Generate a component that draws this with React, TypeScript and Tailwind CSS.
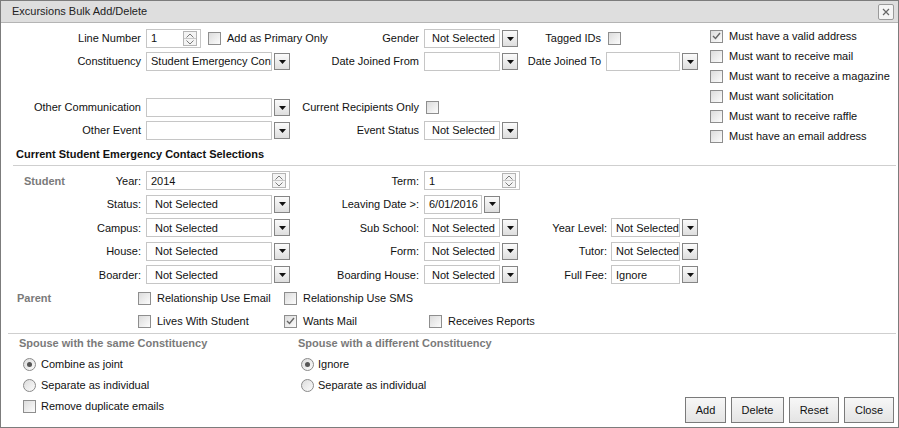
import React from "react";

const FONT = { fontFamily: '"Liberation Sans", Arial, sans-serif' };

function Arrow() {
  return (
    <svg width="7" height="4" viewBox="0 0 7 4">
      <path d="M0 0 H7 L3.5 4 Z" fill="#111" />
    </svg>
  );
}

function Select({ value = "", width, pad = "pl-[4px]" }: { value?: string; width: string; pad?: string }) {
  return (
    <div className={`flex h-[19px] shrink-0 items-center gap-[2px] ${width}`}>
      <div className={`flex h-[19px] flex-1 items-center overflow-hidden whitespace-nowrap border border-[#c6c6c6] bg-white ${pad}`}>
        {value}
      </div>
      <div className="flex h-[17px] w-[16px] shrink-0 items-center justify-center border border-[#858585] bg-gradient-to-b from-[#fbfbfb] to-[#dedede]">
        <Arrow />
      </div>
    </div>
  );
}

function Spinner({ value, width }: { value: string; width: string }) {
  return (
    <div className={`flex h-[19px] shrink-0 items-center border border-[#c6c6c6] bg-white pl-[4px] pr-[3px] ${width}`}>
      <span className="flex-1">{value}</span>
      <div className="flex h-[15px] w-[14px] shrink-0 flex-col border border-[#b5b5b5] bg-[#f4f4f4]">
        <div className="flex flex-1 items-center justify-center border-b border-[#c8c8c8]">
          <svg width="8" height="5" viewBox="0 0 8 5">
            <path d="M0.5 4.5 L4 1 L7.5 4.5" fill="none" stroke="#7a7a7a" strokeWidth="1" />
          </svg>
        </div>
        <div className="flex flex-1 items-center justify-center">
          <svg width="8" height="5" viewBox="0 0 8 5">
            <path d="M0.5 0.5 L4 4 L7.5 0.5" fill="none" stroke="#7a7a7a" strokeWidth="1" />
          </svg>
        </div>
      </div>
    </div>
  );
}

function Check({ checked = false }: { checked?: boolean }) {
  return (
    <div className="flex h-[13px] w-[13px] shrink-0 items-center justify-center border border-[#8e8e8e] bg-gradient-to-br from-[#dcdcdc] to-[#fcfcfc]">
      {checked && (
        <svg width="9" height="8" viewBox="0 0 9 8">
          <path d="M1 4 L3.5 6.5 L8 1" fill="none" stroke="#666" strokeWidth="1.4" />
        </svg>
      )}
    </div>
  );
}

function Radio({ checked = false }: { checked?: boolean }) {
  return (
    <div className="flex h-[13px] w-[13px] shrink-0 items-center justify-center rounded-full border border-[#8a8a8a] bg-gradient-to-br from-[#dcdcdc] to-[#fcfcfc]">
      {checked && <div className="h-[5px] w-[5px] rounded-full bg-[#555]" />}
    </div>
  );
}

function CheckLabel({ label, checked }: { label: string; checked?: boolean }) {
  return (
    <div className="flex items-center gap-[6px] whitespace-nowrap">
      <Check checked={checked} />
      <span>{label}</span>
    </div>
  );
}

function Label({ text, pr = "pr-[5px]" }: { text: string; pr?: string }) {
  return <div className={`whitespace-nowrap text-right ${pr}`}>{text}</div>;
}

function Btn({ text, width }: { text: string; width: string }) {
  return (
    <button className={`h-[26px] border border-[#7a7a7a] bg-gradient-to-b from-[#f7f7f7] to-[#e4e4e4] text-[#111] ${width}`}>
      {text}
    </button>
  );
}

export default function App() {
  return (
    <div style={FONT} className="flex h-[428px] w-[899px] flex-col border border-[#7c7c7c] bg-white text-[11px] text-[#111]">
      {/* TITLE BAR */}
      <div className="flex h-[22px] shrink-0 items-center justify-between border-b border-[#b4b4b4] bg-[#dedede] pl-[11px] pr-[4px] text-[#222]">
        <span>Excursions Bulk Add/Delete</span>
        <div className="flex h-[16px] w-[16px] items-center justify-center rounded-[2px] border border-[#9a9a9a] bg-[#f5f5f5]">
          <svg width="8" height="8" viewBox="0 0 8 8">
            <path d="M1 1 L7 7 M7 1 L1 7" stroke="#666" strokeWidth="1.2" />
          </svg>
        </div>
      </div>

      {/* TOP FILTERS */}
      <div className="flex h-[121px] shrink-0 items-start">
        <div className="mt-[4px] grid grid-cols-[145px_148px_130px_96px_86px_100px] auto-rows-[23px] items-center">
          <Label text="Line Number" />
          <div className="flex items-center gap-[7px] whitespace-nowrap">
            <Spinner value="1" width="w-[55px]" />
            <CheckLabel label="Add as Primary Only" />
          </div>
          <Label text="Gender" />
          <Select value="Not Selected" width="w-[94px]" pad="pl-[7px]" />
          <Label text="Tagged IDs" />
          <div className="pl-[2px]">
            <Check />
          </div>

          <Label text="Constituency" />
          <Select value="Student Emergency Contact" width="w-[144px]" />
          <Label text="Date Joined From" />
          <Select width="w-[94px]" />
          <Label text="Date Joined To" />
          <Select width="w-[92px]" />

          <div className="col-span-6" />

          <Label text="Other Communication" />
          <Select width="w-[144px]" />
          <Label text="Current Recipients Only" />
          <div className="col-span-3 pl-[2px]">
            <Check />
          </div>

          <Label text="Other Event" />
          <Select width="w-[144px]" />
          <Label text="Event Status" />
          <Select value="Not Selected" width="w-[94px]" pad="pl-[7px]" />
          <div className="col-span-2" />
        </div>

        <div className="ml-[4px] mt-[3px] flex flex-col">
          {[
            { l: "Must have a valid address", c: true },
            { l: "Must want to receive mail" },
            { l: "Must want to receive a magazine" },
            { l: "Must want solicitation" },
            { l: "Must want to receive raffle" },
            { l: "Must have an email address" },
          ].map((r) => (
            <div key={r.l} className="flex h-[20px] items-center">
              <CheckLabel label={r.l} checked={r.c} />
            </div>
          ))}
        </div>
      </div>

      {/* SECTION HEADER */}
      <div className="ml-[12px] mr-[2px] flex h-[22px] shrink-0 items-center border-b border-[#cfcfcf] pl-[3px] font-bold">
        Current Student Emergency Contact Selections
      </div>

      {/* STUDENT */}
      <div className="mt-[3px] grid grid-cols-[145px_148px_130px_100px_87px_90px] auto-rows-[23.5px] items-center">
        <div className="flex items-center justify-between pl-[23px] pr-[5px]">
          <span className="font-bold text-[#7a7a7a]">Student</span>
          <span>Year:</span>
        </div>
        <Spinner value="2014" width="w-[144px]" />
        <Label text="Term:" />
        <Spinner value="1" width="w-[96px]" />
        <div className="col-span-2" />

        <Label text="Status:" />
        <Select value="Not Selected" width="w-[144px]" pad="pl-[8px]" />
        <Label text="Leaving Date >:" />
        <Select value="6/01/2016" width="w-[76px]" />
        <div className="col-span-2" />

        <Label text="Campus:" />
        <Select value="Not Selected" width="w-[144px]" pad="pl-[8px]" />
        <Label text="Sub School:" />
        <Select value="Not Selected" width="w-[94px]" pad="pl-[7px]" />
        <Label text="Year Level:" pr="pr-[4px]" />
        <Select value="Not Selected" width="w-[87px]" />

        <Label text="House:" />
        <Select value="Not Selected" width="w-[144px]" pad="pl-[8px]" />
        <Label text="Form:" />
        <Select value="Not Selected" width="w-[94px]" pad="pl-[7px]" />
        <Label text="Tutor:" pr="pr-[4px]" />
        <Select value="Not Selected" width="w-[87px]" />

        <Label text="Boarder:" />
        <Select value="Not Selected" width="w-[144px]" pad="pl-[8px]" />
        <Label text="Boarding House:" />
        <Select value="Not Selected" width="w-[94px]" pad="pl-[7px]" />
        <Label text="Full Fee:" pr="pr-[4px]" />
        <Select value="Ignore" width="w-[87px]" />
      </div>

      {/* PARENT */}
      <div className="grid grid-cols-[137px_146px_145px_1fr] auto-rows-[23px] items-center">
        <div className="pl-[16px] font-bold text-[#7a7a7a]">Parent</div>
        <CheckLabel label="Relationship Use Email" />
        <CheckLabel label="Relationship Use SMS" />
        <div />

        <div />
        <CheckLabel label="Lives With Student" />
        <CheckLabel label="Wants Mail" checked />
        <CheckLabel label="Receives Reports" />
      </div>

      {/* SPOUSE + ACTIONS */}
      <div className="ml-[7px] mr-[2px] flex flex-1 border-t border-[#cfcfcf] pb-[4px] pl-[11px]">
        <div className="flex w-[279px] flex-col">
          <div className="flex h-[20px] items-center font-bold text-[#7a7a7a]">Spouse with the same Constituency</div>
          <div className="flex h-[21px] items-center gap-[5px] pl-[4px]">
            <Radio checked />
            <span>Combine as joint</span>
          </div>
          <div className="flex h-[21px] items-center gap-[5px] pl-[4px]">
            <Radio />
            <span>Separate as individual</span>
          </div>
          <div className="flex h-[21px] items-center gap-[5px] pl-[4px]">
            <Check />
            <span>Remove duplicate emails</span>
          </div>
        </div>

        <div className="flex w-[260px] flex-col">
          <div className="flex h-[20px] items-center font-bold text-[#7a7a7a]">Spouse with a different Constituency</div>
          <div className="flex h-[21px] items-center gap-[4px] pl-[3px]">
            <Radio checked />
            <span>Ignore</span>
          </div>
          <div className="flex h-[21px] items-center gap-[4px] pl-[3px]">
            <Radio />
            <span>Separate as individual</span>
          </div>
        </div>

        <div className="flex flex-1 items-end justify-end gap-[5px] pr-[2px]">
          <Btn text="Add" width="w-[41px]" />
          <Btn text="Delete" width="w-[53px]" />
          <Btn text="Reset" width="w-[50px]" />
          <Btn text="Close" width="w-[50px]" />
        </div>
      </div>
    </div>
  );
}
